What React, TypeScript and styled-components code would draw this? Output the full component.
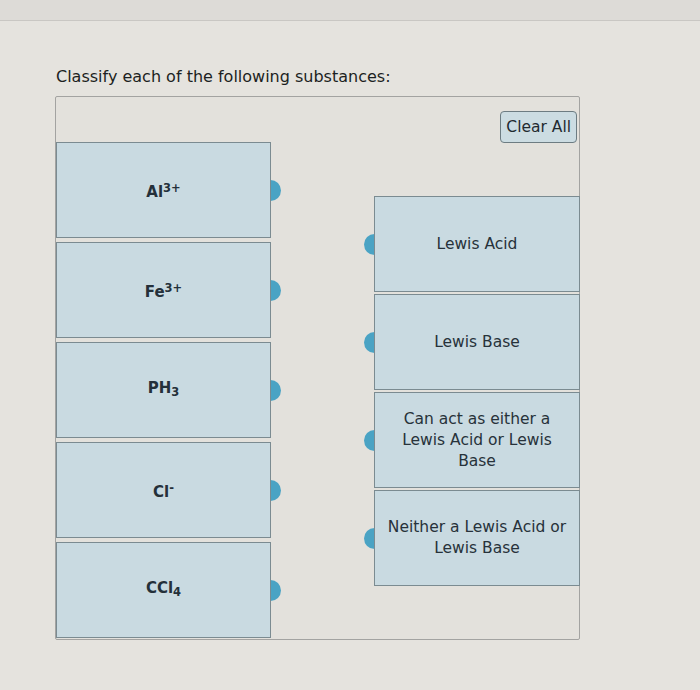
import styled, { createGlobalStyle } from "styled-components"

const GlobalStyle = createGlobalStyle`
    html, body {
        margin: 0;
        padding: 0;
        background: #e5e3de;
    }
    body {
        font-family: "DejaVu Sans", Verdana, sans-serif;
        color: #1f2327;
    }
`

const Page = styled.div`
    width: 700px;
    height: 690px;
    overflow: hidden;
    background: #e5e3de;
`

const TopBar = styled.div`
    height: 20px;
    background: #dddbd7;
    border-bottom: 1px solid #c9c7c3;
`

const Question = styled.div`
    padding: 0 0 0 56px;
    margin-top: 45px;
    font-size: 16px;
    line-height: 22px;
    color: #1c1f22;
`

const Panel = styled.div`
    margin: 8px 0 0 55px;
    width: 525px;
    height: 544px;
    box-sizing: border-box;
    border: 1px solid #a3a3a1;
    border-radius: 2px;
    background: #e3e1dc;
    display: flex;
    flex-direction: column;
`

const PanelHeader = styled.div`
    height: 45px;
    display: flex;
    justify-content: flex-end;
    align-items: flex-start;
    padding: 14px 2px 0 0;
    box-sizing: border-box;
`

const ClearButton = styled.button`
    font-family: "DejaVu Sans", Verdana, sans-serif;
    font-size: 15.5px;
    color: #1f2a30;
    background: #ccdce2;
    border: 1px solid #6d7c82;
    border-radius: 4px;
    height: 32px;
    padding: 0 5px;
    cursor: pointer;
`

const Board = styled.div`
    display: flex;
    align-items: flex-start;
`

const Column = styled.div<{ $offset?: number; $gap: number }>`
    display: flex;
    flex-direction: column;
    gap: ${(p) => p.$gap}px;
    padding-top: ${(p) => p.$offset ?? 0}px;
`

const Card = styled.div<{ $side: "left" | "right"; $width: number }>`
    position: relative;
    width: ${(p) => p.$width}px;
    height: 96px;
    box-sizing: border-box;
    background: #c9dae1;
    border: 1px solid #7b8b91;
    display: flex;
    align-items: center;
    justify-content: center;
    text-align: center;
    font-size: 15.5px;
    line-height: 21px;
    color: #27323a;
    padding: 0 10px;

    &::after {
        content: "";
        position: absolute;
        top: 50%;
        ${(p) => (p.$side === "left" ? "right: -11px;" : "left: -11px;")}
        width: 21px;
        height: 21px;
        margin-top: -10px;
        border-radius: 50%;
        background: #4aa3c4;
        z-index: -1;
    }
`

const Formula = styled.span`
    font-weight: bold;
    font-size: 15px;
    color: #24303a;

    sup {
        font-size: 11.5px;
        vertical-align: 5px;
    }
    sub {
        font-size: 11.5px;
        vertical-align: -3px;
    }
`

const Layer = styled.div`
    position: relative;
    z-index: 0;
`

const substances = [
    <>Al<sup>3+</sup></>,
    <>Fe<sup>3+</sup></>,
    <>PH<sub>3</sub></>,
    <>Cl<sup>-</sup></>,
    <>CCl<sub>4</sub></>,
]

const categories = [
    "Lewis Acid",
    "Lewis Base",
    "Can act as either a Lewis Acid or Lewis Base",
    "Neither a Lewis Acid or Lewis Base",
]

export default function App() {
    return (
        <Page>
            <GlobalStyle />
            <TopBar />
            <Question>Classify each of the following substances:</Question>
            <Panel>
                <PanelHeader>
                    <ClearButton type="button">Clear All</ClearButton>
                </PanelHeader>
                <Board>
                    <Layer>
                        <Column $gap={4}>
                            {substances.map((s, i) => (
                                <Card key={i} $side="left" $width={215}>
                                    <Formula>{s}</Formula>
                                </Card>
                            ))}
                        </Column>
                    </Layer>
                    <Layer style={{ marginLeft: 103 }}>
                        <Column $gap={2} $offset={54}>
                            {categories.map((c) => (
                                <Card key={c} $side="right" $width={206}>
                                    {c}
                                </Card>
                            ))}
                        </Column>
                    </Layer>
                </Board>
            </Panel>
        </Page>
    )
}
